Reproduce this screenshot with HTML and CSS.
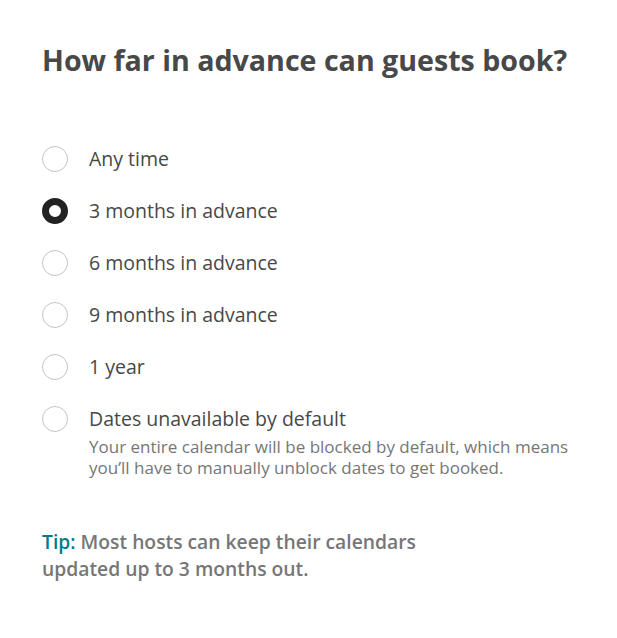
FILE: index.html
```html
<!DOCTYPE html>
<html>
<head>
<meta charset="utf-8">
<link rel="stylesheet" href="styles.css">
</head>
<body>
<main class="page">
  <h1 class="title">How far in advance can guests book?</h1>
  <div class="options">
    <label class="option"><span class="radio"></span><span class="label">Any time</span></label>
    <label class="option"><span class="radio checked"></span><span class="label">3 months in advance</span></label>
    <label class="option"><span class="radio"></span><span class="label">6 months in advance</span></label>
    <label class="option"><span class="radio"></span><span class="label">9 months in advance</span></label>
    <label class="option"><span class="radio"></span><span class="label">1 year</span></label>
    <label class="option"><span class="radio"></span><span class="text"><span class="label">Dates unavailable by default</span><span class="desc">Your entire calendar will be blocked by default, which means you’ll have to manually unblock dates to get booked.</span></span></label>
  </div>
  <p class="tip"><span class="tip-key">Tip:</span> Most hosts can keep their calendars updated up to 3 months out.</p>
</main>
</body>
</html>
```
FILE: styles.css
```css
html, body { margin: 0; padding: 0; background: #fff; }
body { font-family: "Open Sans", "Liberation Sans", sans-serif; color: #484848; }
.page { padding: 40px 42px 0 42px; }
.title { margin: 0; font-size: 28.6px; font-weight: 700; line-height: 40px; color: #484848; letter-spacing: 0; }
.options { margin-top: 66px; display: flex; flex-direction: column; gap: 26px; }
.option { display: flex; align-items: flex-start; gap: 21px; }
.radio { flex: none; width: 26px; height: 26px; box-sizing: border-box; border: 1px solid #c4c4c4; border-radius: 50%; }
.radio.checked { border: 7px solid #222; }
.label { font-size: 19.5px; line-height: 26px; font-weight: 400; color: #484848; display: block; }
.text { display: flex; flex-direction: column; }
.desc { font-size: 17px; line-height: 21px; color: #767676; font-weight: 400; margin-top: 4px; max-width: 500px; }
.tip { margin: 50px 0 0 0; font-size: 19.3px; line-height: 27px; font-weight: 600; color: #767676; max-width: 400px; }
.tip-key { color: #007a87; }
```
